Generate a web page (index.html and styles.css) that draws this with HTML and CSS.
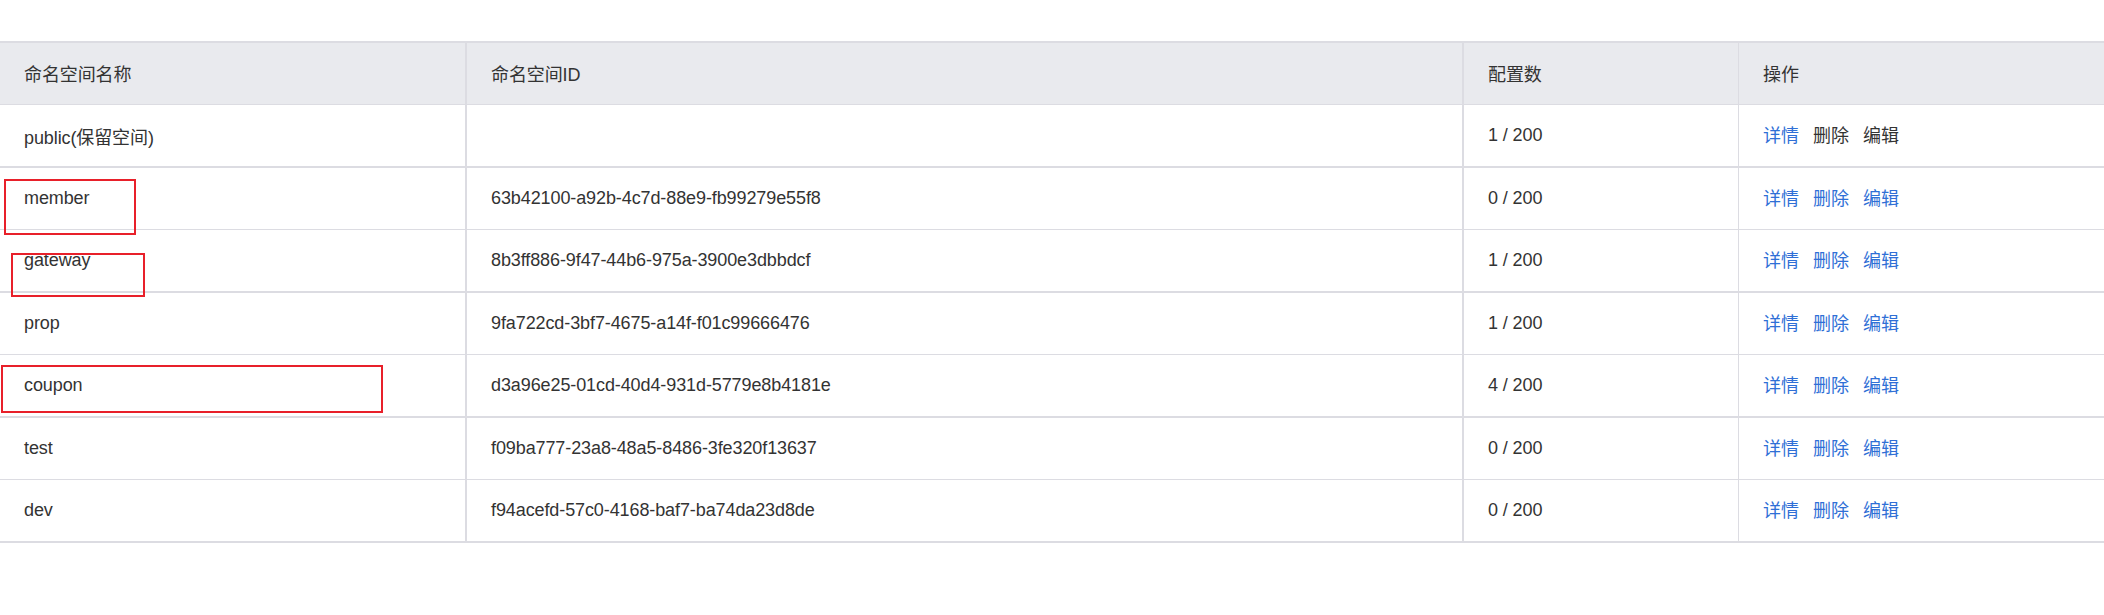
FILE: index.html
```html
<!DOCTYPE html>
<html lang="zh-CN">
<head>
<meta charset="utf-8">
<title>命名空间</title>
<link rel="stylesheet" href="styles.css">
</head>
<body>
<div class="page">
  <div class="table">
    <div class="row head">
      <div class="cell c1">命名空间名称</div>
      <div class="cell c2">命名空间ID</div>
      <div class="cell c3">配置数</div>
      <div class="cell c4">操作</div>
    </div>
    <div class="row thick">
      <div class="cell c1">public(保留空间)</div>
      <div class="cell c2"></div>
      <div class="cell c3">1 / 200</div>
      <div class="cell c4"><a class="act">详情</a><span class="act plain">删除</span><span class="act plain">编辑</span></div>
    </div>
    <div class="row thin">
      <div class="cell c1">member</div>
      <div class="cell c2">63b42100-a92b-4c7d-88e9-fb99279e55f8</div>
      <div class="cell c3">0 / 200</div>
      <div class="cell c4"><a class="act">详情</a><a class="act">删除</a><a class="act">编辑</a></div>
    </div>
    <div class="row thick">
      <div class="cell c1">gateway</div>
      <div class="cell c2">8b3ff886-9f47-44b6-975a-3900e3dbbdcf</div>
      <div class="cell c3">1 / 200</div>
      <div class="cell c4"><a class="act">详情</a><a class="act">删除</a><a class="act">编辑</a></div>
    </div>
    <div class="row thin">
      <div class="cell c1">prop</div>
      <div class="cell c2">9fa722cd-3bf7-4675-a14f-f01c99666476</div>
      <div class="cell c3">1 / 200</div>
      <div class="cell c4"><a class="act">详情</a><a class="act">删除</a><a class="act">编辑</a></div>
    </div>
    <div class="row thick">
      <div class="cell c1">coupon</div>
      <div class="cell c2">d3a96e25-01cd-40d4-931d-5779e8b4181e</div>
      <div class="cell c3">4 / 200</div>
      <div class="cell c4"><a class="act">详情</a><a class="act">删除</a><a class="act">编辑</a></div>
    </div>
    <div class="row thin">
      <div class="cell c1">test</div>
      <div class="cell c2">f09ba777-23a8-48a5-8486-3fe320f13637</div>
      <div class="cell c3">0 / 200</div>
      <div class="cell c4"><a class="act">详情</a><a class="act">删除</a><a class="act">编辑</a></div>
    </div>
    <div class="row thick">
      <div class="cell c1">dev</div>
      <div class="cell c2">f94acefd-57c0-4168-baf7-ba74da23d8de</div>
      <div class="cell c3">0 / 200</div>
      <div class="cell c4"><a class="act">详情</a><a class="act">删除</a><a class="act">编辑</a></div>
    </div>
  </div>
  <div class="mark mark-member"></div>
  <div class="mark mark-gateway"></div>
  <div class="mark mark-coupon"></div>
</div>
</body>
</html>
```

FILE: styles.css
```css
html, body {
  margin: 0;
  padding: 0;
  background: #ffffff;
}

.page {
  position: relative;
  padding-top: 41px;
  font-family: "Liberation Sans", "Noto Sans CJK SC", sans-serif;
  font-size: 18px;
  color: #333333;
}

.table {
  border-top: 2px solid #dcdce2;
}

.row {
  display: grid;
  grid-template-columns: 467px 997px 275px 1fr;
}

.row.head {
  background: #e9eaee;
  border-bottom: 1px solid #dcdce2;
}

.row.head .cell {
  padding-bottom: 2px;
}

.row.thick {
  border-bottom: 2px solid #dcdce2;
}

.row.thin {
  border-bottom: 1px solid #dcdce2;
}

.cell {
  height: 61px;
  display: flex;
  align-items: center;
  padding-left: 24px;
  white-space: nowrap;
  box-sizing: border-box;
  letter-spacing: -0.1px;
}

.c1 { border-right: 2px solid #dcdce2; }
.c2 { border-right: 2px solid #dcdce2; }
.c3 { border-right: 1px solid #dcdce2; }

.act {
  font-family: "Noto Sans CJK SC", sans-serif;
  line-height: 1;
  padding-bottom: 4px;
  color: #2f6fd6;
  margin-right: 14px;
  text-decoration: none;
  letter-spacing: 0;
}

.act.plain {
  color: #333333;
}

.mark {
  position: absolute;
  border: 2px solid #e8202a;
  box-sizing: border-box;
}

.mark-member {
  left: 4px;
  top: 179px;
  width: 132px;
  height: 56px;
}

.mark-gateway {
  left: 11px;
  top: 253px;
  width: 134px;
  height: 44px;
}

.mark-coupon {
  left: 1px;
  top: 365px;
  width: 382px;
  height: 48px;
}
```
